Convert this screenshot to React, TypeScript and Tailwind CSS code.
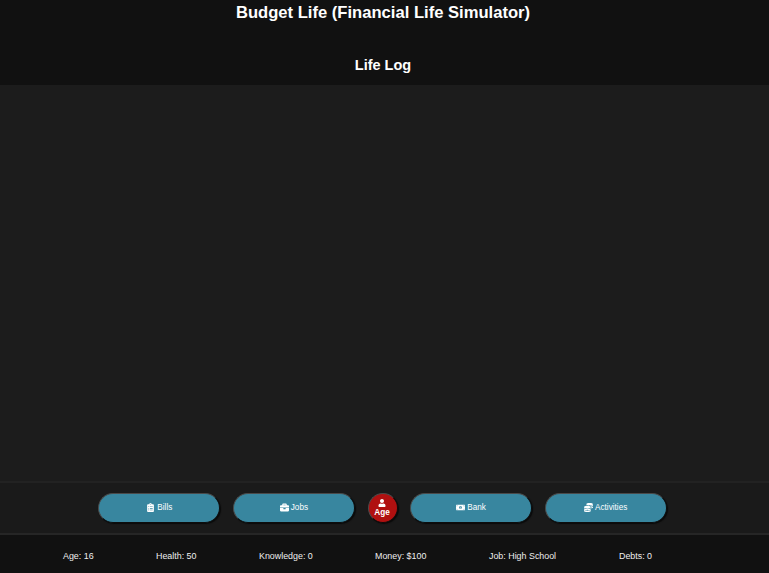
import React from 'react';
import { FaClipboardList, FaBriefcase, FaUser, FaMoneyBillAlt, FaCoins } from 'react-icons/fa';

const ActionButton: React.FC<{ icon: React.ReactNode; label: string }> = ({ icon, label }) => (
  <button className="w-[122px] h-[30px] rounded-[20px] bg-[#38869f] border-[1.5px] border-t-[#4a4a4a] border-l-[#4a4a4a] border-r-[#0d0d0d] border-b-[#0d0d0d] shadow-[1px_1px_1px_#0a0a0a] text-white text-[8.2px] font-medium flex justify-center items-center gap-[2px]">
    <span className="-mt-[1px]">{icon}</span>
    <span className="mt-[2px]">{label}</span>
  </button>
);

const stats = [
  { label: 'Age: 16', width: 'w-[93px]' },
  { label: 'Health: 50', width: 'w-[103px]' },
  { label: 'Knowledge: 0', width: 'w-[116px]' },
  { label: 'Money: $100', width: 'w-[114px]' },
  { label: 'Job: High School', width: 'w-[130px]' },
  { label: 'Debts: 0', width: 'w-[87px]' },
];

export default function App() {
  return (
    <div className="h-[573px] flex flex-col overflow-hidden bg-[#111] text-white font-['Liberation_Sans',Arial,sans-serif]">
      <header className="h-[85px] bg-[#111] text-center shrink-0 pr-[3px]">
        <h1 className="text-[16.6px] leading-[26px] font-bold">Budget Life (Financial Life Simulator)</h1>
        <h2 className="mt-[26px] text-[14.5px] leading-[26px] font-bold">Life Log</h2>
      </header>

      <main className="flex-1 bg-[#1c1c1c]" />

      <nav className="h-[54px] shrink-0 bg-[#1a1a1a] border-t-2 border-t-[#222] border-b-2 border-b-[#262626] flex justify-center items-center gap-[12.6px] pr-[4px] pb-[1px]">
        <ActionButton icon={<FaClipboardList size={9} />} label="Bills" />
        <ActionButton icon={<FaBriefcase size={9} />} label="Jobs" />
        <button className="w-[30px] h-[30px] rounded-full bg-[#b01010] border-[1.5px] border-t-[#4a4a4a] border-l-[#4a4a4a] border-r-[#0d0d0d] border-b-[#0d0d0d] shadow-[1px_1px_1px_#0a0a0a] text-white text-[8.2px] leading-[9px] font-bold flex flex-col justify-center items-center pr-[1px]">
          <FaUser size={8} />
          <span className="mt-[1px]">Age</span>
        </button>
        <ActionButton icon={<FaMoneyBillAlt size={9} />} label="Bank" />
        <ActionButton icon={<FaCoins size={9} />} label="Activities" />
      </nav>

      <footer className="h-[38px] shrink-0 bg-[#111] flex items-center pl-[63px] pt-[6px] text-[#efefef] text-[8.9px]">
        {stats.map(s => (
          <span key={s.label} className={s.width}>{s.label}</span>
        ))}
      </footer>
    </div>
  );
}
